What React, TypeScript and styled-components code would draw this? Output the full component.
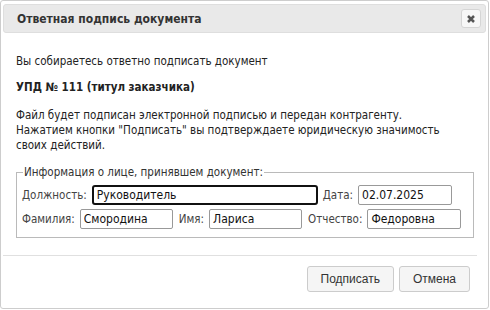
import React from 'react';
import styled, { createGlobalStyle } from 'styled-components';

const font = '"DejaVu Sans Condensed", "DejaVu Sans", Verdana, sans-serif';

const GlobalStyle = createGlobalStyle`
  html, body {
    margin: 0;
    padding: 0;
    background: #fff;
  }
  body {
    font-family: ${font};
    font-stretch: condensed;
    color: #222;
  }
`;

const Dialog = styled.div`
  box-sizing: border-box;
  width: 489px;
  height: 309px;
  border: 1px solid #cdcdcd;
  border-radius: 3px;
  padding: 3px 2px 0 2px;
  display: flex;
  flex-direction: column;
  background: #fff;
`;

const Header = styled.div`
  box-sizing: border-box;
  height: 29px;
  display: flex;
  align-items: center;
  justify-content: space-between;
  padding: 0 4px 0 13px;
  background: #e9e9e9;
  border: 1px solid #dedede;
  border-radius: 3px;
`;

const Title = styled.span`
  font-size: 12px;
  font-weight: bold;
  color: #333;
`;

const CloseButton = styled.button`
  box-sizing: border-box;
  width: 20px;
  height: 19px;
  padding: 0;
  display: flex;
  align-items: center;
  justify-content: center;
  background: #f7f7f7;
  border: 1px solid #d5d5d5;
  border-radius: 3px;
`;

const Body = styled.div`
  padding: 21px 14px 0 13px;
  font-size: 11.5px;
  color: #222;
`;

const Paragraph = styled.p<{ $bold?: boolean; $gap?: number }>`
  margin: 0 0 ${(p) => p.$gap ?? 11}px 0;
  line-height: 15px;
  font-weight: ${(p) => (p.$bold ? 'bold' : 'normal')};
`;

const Fieldset = styled.fieldset`
  margin: 12px 0 0 0;
  padding: 6px 5px 8px 5px;
  width: 458px;
  box-sizing: border-box;
  border: 1px solid #bababa;
  display: flex;
  flex-direction: column;
  gap: 4px;
`;

const Legend = styled.legend`
  padding: 0 1px;
  margin-left: 1px;
  font-size: 11.5px;
  color: #333;
`;

const Row = styled.div`
  display: flex;
  align-items: center;
`;

const Label = styled.span<{ $gap?: number }>`
  color: #444;
  margin-left: ${(p) => p.$gap ?? 0}px;
  margin-right: 5px;
  white-space: nowrap;
`;

const Input = styled.input<{ $w: number; $focused?: boolean }>`
  box-sizing: border-box;
  width: ${(p) => p.$w}px;
  height: 20px;
  padding: 0 3px;
  font-family: ${font};
  font-stretch: condensed;
  font-size: 12px;
  color: #111;
  border: ${(p) => (p.$focused ? '2px solid #111' : '1px solid #999')};
  border-radius: ${(p) => (p.$focused ? '3px' : '2px')};
  outline: none;
  background: #fff;
`;

const Separator = styled.div`
  height: 1px;
  background: #e0e0e0;
  margin: 17px 9px 0 0;
`;

const Footer = styled.div`
  display: flex;
  justify-content: flex-end;
  gap: 5px;
  padding: 10px 16px 0 0;
`;

const Button = styled.button`
  height: 26px;
  padding: 0 13px;
  font-family: "Liberation Sans", Arial, sans-serif;
  font-size: 12px;
  color: #333;
  background: #f5f5f5;
  border: 1px solid #cccccc;
  border-radius: 3px;
`;

export default function App() {
  return (
    <>
      <GlobalStyle />
      <Dialog>
        <Header>
          <Title>Ответная подпись документа</Title>
          <CloseButton aria-label="Закрыть">
            <svg width="10" height="10" viewBox="0 0 10 10">
              <path d="M2 2 L8 8 M8 2 L2 8" stroke="#555" strokeWidth="2.5" />
            </svg>
          </CloseButton>
        </Header>
        <Body>
          <Paragraph>Вы собираетесь ответно подписать документ</Paragraph>
          <Paragraph $bold $gap={13}>УПД № 111 (титул заказчика)</Paragraph>
          <Paragraph>
            Файл будет подписан электронной подписью и передан контрагенту.
            <br />
            Нажатием кнопки "Подписать" вы подтверждаете юридическую значимость
            <br />
            своих действий.
          </Paragraph>
          <Fieldset>
            <Legend>Информация о лице, принявшем документ:</Legend>
            <Row>
              <Label>Должность:</Label>
              <Input $w={226} $focused defaultValue="Руководитель" />
              <Label $gap={5}>Дата:</Label>
              <Input $w={94} defaultValue="02.07.2025" />
            </Row>
            <Row>
              <Label>Фамилия:</Label>
              <Input $w={93} defaultValue="Смородина" />
              <Label $gap={6}>Имя:</Label>
              <Input $w={93} defaultValue="Лариса" />
              <Label $gap={6}>Отчество:</Label>
              <Input $w={94} defaultValue="Федоровна" />
            </Row>
          </Fieldset>
        </Body>
        <Separator />
        <Footer>
          <Button>Подписать</Button>
          <Button>Отмена</Button>
        </Footer>
      </Dialog>
    </>
  );
}
